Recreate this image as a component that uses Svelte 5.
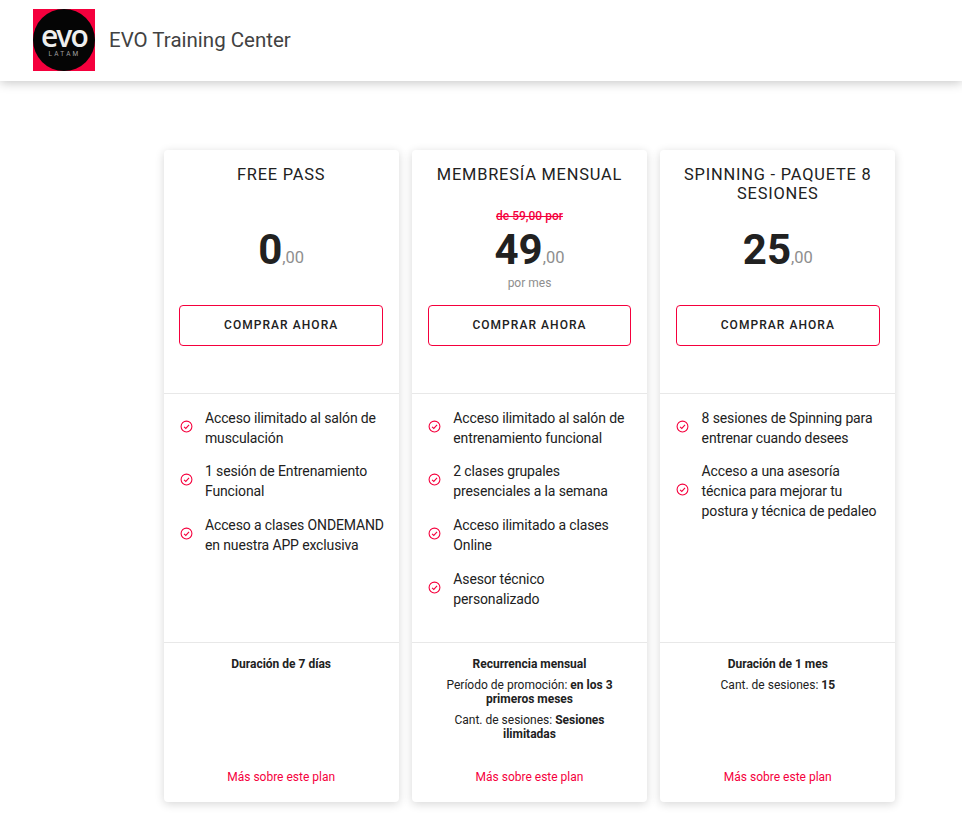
<script>
	const plans = [
		{
			title: 'FREE PASS',
			price: '0',
			features: [
				'Acceso ilimitado al salón de musculación',
				'1 sesión de Entrenamiento Funcional',
				'Acceso a clases ONDEMAND en nuestra APP exclusiva'
			],
			details: [{ strong: 'Duración de 7 días' }]
		},
		{
			title: 'MEMBRESÍA MENSUAL',
			oldPrice: 'de 59,00 por',
			price: '49',
			period: 'por mes',
			features: [
				'Acceso ilimitado al salón de entrenamiento funcional',
				'2 clases grupales presenciales a la semana',
				'Acceso ilimitado a clases Online',
				'Asesor técnico personalizado'
			],
			details: [
				{ strong: 'Recurrencia mensual' },
				{ label: 'Período de promoción: ', strong: 'en los 3 primeros meses' },
				{ label: 'Cant. de sesiones: ', strong: 'Sesiones ilimitadas' }
			]
		},
		{
			title: 'SPINNING - PAQUETE 8 SESIONES',
			price: '25',
			features: [
				'8 sesiones de Spinning para entrenar cuando desees',
				'Acceso a una asesoría técnica para mejorar tu postura y técnica de pedaleo'
			],
			details: [
				{ strong: 'Duración de 1 mes' },
				{ label: 'Cant. de sesiones: ', strong: '15' }
			]
		}
	]
</script>

<header>
	<svg class="logo" viewBox="0 0 62 62" aria-label="EVO Latam">
		<rect width="62" height="62" fill="#f5003d" />
		<circle cx="31" cy="31" r="31" fill="#050505" />
		<text x="31" y="38" class="logo-name" text-anchor="middle">evo</text>
		<text x="31.5" y="46.5" class="logo-sub" text-anchor="middle">LATAM</text>
	</svg>
	<h1>EVO Training Center</h1>
</header>

<main>
	{#each plans as plan}
		<article>
			<section class="head">
				<h2>{plan.title}</h2>
				<div class="old">{plan.oldPrice ?? ''}</div>
				<div class="price"><b>{plan.price}</b><span>,00</span></div>
				<div class="period">{plan.period ?? ''}</div>
				<button>COMPRAR AHORA</button>
			</section>
			<ul>
				{#each plan.features as feature}
					<li>
						<svg viewBox="0 0 24 24" class="check">
							<circle cx="12" cy="12" r="10" />
							<path d="M7.5 12.5l3.2 3 6-6.5" />
						</svg>
						<span>{feature}</span>
					</li>
				{/each}
			</ul>
			<section class="foot">
				<div class="details">
					{#each plan.details as row}
						<p>{row.label ?? ''}<strong>{row.strong}</strong></p>
					{/each}
				</div>
				<a href="#plan">Más sobre este plan</a>
			</section>
		</article>
	{/each}
</main>

<style>
	:global(body) {
		background: #fff;
		font-family: Roboto, sans-serif;
		color: #212121;
	}
	header {
		height: 81px;
		box-sizing: border-box;
		display: flex;
		align-items: center;
		gap: 14px;
		padding: 0 0 1px 33px;
		background: #fff;
		box-shadow: 0 2px 10px rgba(0, 0, 0, 0.22);
	}
	.logo {
		width: 62px;
		height: 62px;
	}
	.logo-name {
		font: 600 30px 'Open Sans', sans-serif;
		fill: #eee;
		letter-spacing: -1.8px;
	}
	.logo-sub {
		font: 400 6.5px Roboto, sans-serif;
		fill: #a0a0a0;
		letter-spacing: 2.2px;
	}
	h1 {
		margin: 0;
		font-size: 20.5px;
		font-weight: 400;
		color: #424242;
	}
	main {
		display: grid;
		grid-template-columns: repeat(3, 235px);
		gap: 13.33px;
		padding: 69px 0 29px 163.67px;
	}
	article {
		height: 652px;
		display: flex;
		flex-direction: column;
		border-radius: 4px;
		background: #fff;
		box-shadow: 0 2px 10px rgba(0, 0, 0, 0.16);
	}
	.head {
		height: 244px;
		flex: none;
		box-sizing: border-box;
		padding: 15px 15px 0;
		display: flex;
		flex-direction: column;
		align-items: center;
		border-bottom: 1px solid #e8e8e8;
	}
	h2 {
		margin: 0;
		height: 44px;
		font-size: 16.4px;
		line-height: 19px;
		font-weight: 400;
		letter-spacing: 0.8px;
		text-align: center;
	}
	.old {
		height: 14px;
		font-size: 12px;
		line-height: 14px;
		font-weight: 500;
		color: #f5003d;
		text-decoration: line-through;
	}
	.price {
		height: 44px;
		margin-top: 5px;
		line-height: 44px;
		color: #212121;
	}
	.price b {
		font-size: 42px;
	}
	.price span {
		font-size: 16.5px;
		color: #8e8e8e;
		vertical-align: 1px;
	}
	.period {
		height: 14px;
		margin-top: 4px;
		font-size: 12px;
		line-height: 14px;
		color: #8e8e8e;
	}
	button {
		width: 203.9px;
		height: 41px;
		margin-top: 15px;
		padding: 0 0 1px;
		flex: none;
		border: 1px solid #f5003d;
		border-radius: 4px;
		background: #fff;
		font: 500 12px Roboto, sans-serif;
		letter-spacing: 1.05px;
		color: #212121;
	}
	ul {
		height: 249px;
		flex: none;
		box-sizing: border-box;
		margin: 0;
		padding: 13.8px 13.5px 0 15px;
		list-style: none;
		display: flex;
		flex-direction: column;
		gap: 13.6px;
		border-bottom: 1px solid #e8e8e8;
	}
	li {
		display: flex;
		align-items: center;
		gap: 12.3px;
		font-size: 14px;
		letter-spacing: -0.13px;
		line-height: 20px;
	}
	.check {
		width: 13px;
		height: 13px;
		margin: 0 0 3px 1px;
		flex: none;
		fill: none;
		stroke: #f5003d;
		stroke-width: 2;
	}
	.foot {
		flex: 1;
		padding: 14px 15px 18px;
		display: flex;
		flex-direction: column;
		align-items: center;
		text-align: center;
		font-size: 12px;
		line-height: 14px;
	}
	.details {
		flex: 1;
	}
	p {
		margin: 0 0 7px;
	}
	strong {
		font-weight: 700;
	}
	a {
		color: #f5003d;
		text-decoration: none;
	}
</style>
